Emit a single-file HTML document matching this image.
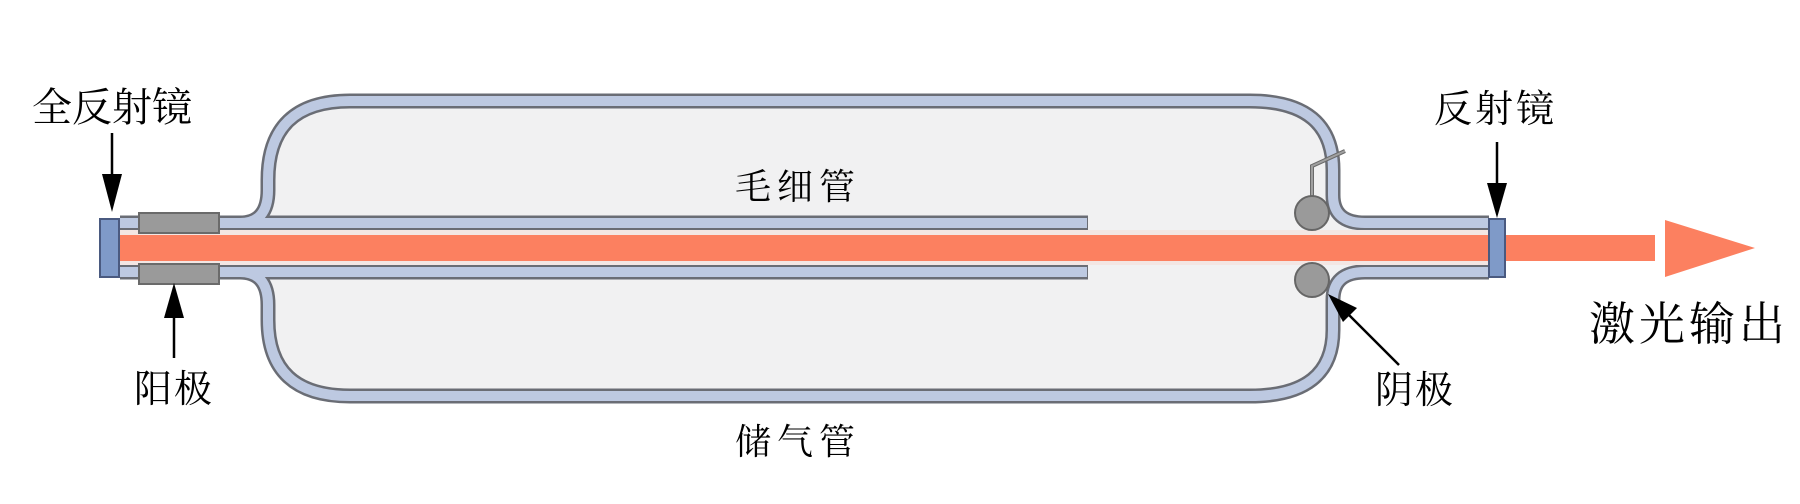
<!DOCTYPE html>
<html><head><meta charset="utf-8"><style>
html,body{margin:0;padding:0;background:#fff;}
svg{display:block}
text{font-family:"Noto Serif CJK SC","Liberation Serif",serif;fill:#000;}
</style></head><body>
<svg width="1800" height="504" viewBox="0 0 1800 504" xmlns="http://www.w3.org/2000/svg">
<path d="M240 223 Q268 223 268 190 L268 180 Q268 101 350 101 L1250 101 Q1333 101 1333 170 L1333 195 Q1333 223 1365 223 L1365 272 Q1333 272 1333 300 L1333 330 Q1333 396 1250 396 L350 396 Q268 396 268 320 L268 305 Q268 272 240 272 Z" fill="#F1F1F2"/>
<g fill="none" stroke-linejoin="round">
<g stroke="#6A6D75" stroke-width="15">
<path d="M219 223 L240 223 Q268 223 268 190 L268 180 Q268 101 350 101 L1250 101 Q1333 101 1333 170 L1333 195 Q1333 223 1365 223 L1489 223"/>
<path d="M219 272 L240 272 Q268 272 268 305 L268 320 Q268 396 350 396 L1250 396 Q1333 396 1333 330 L1333 300 Q1333 272 1365 272 L1489 272"/>
<path d="M120 223 L1088 223 M120 272 L1088 272"/>
</g>
<g stroke="#BDC9E1" stroke-width="10">
<path d="M219 223 L240 223 Q268 223 268 190 L268 180 Q268 101 350 101 L1250 101 Q1333 101 1333 170 L1333 195 Q1333 223 1365 223 L1489 223"/>
<path d="M219 272 L240 272 Q268 272 268 305 L268 320 Q268 396 350 396 L1250 396 Q1333 396 1333 330 L1333 300 Q1333 272 1365 272 L1489 272"/>
<path d="M120 223 L1087 223 M120 272 L1087 272"/>
</g>
</g>
<rect x="120" y="230" width="1369" height="35" fill="#F3E6E3"/>
<rect x="120" y="235" width="1535" height="26" fill="#FC8060"/>
<polygon points="1665,220 1755,248 1665,277" fill="#FC8060"/>
<rect x="139" y="213" width="80" height="20" fill="#9A9A9A" stroke="#6A6A6A" stroke-width="2"/>
<rect x="139" y="264" width="80" height="20" fill="#9A9A9A" stroke="#6A6A6A" stroke-width="2"/>
<rect x="100" y="219" width="19" height="58" fill="#7F9AC8" stroke="#4A5A80" stroke-width="2"/>
<rect x="1489" y="219" width="16" height="58" fill="#7F9AC8" stroke="#4A5A80" stroke-width="2"/>
<path d="M1312 198 L1312 166 L1345 151" fill="none" stroke="#6A6A6A" stroke-width="4"/>
<path d="M1312 198 L1312 166 L1345 151" fill="none" stroke="#A0A0A0" stroke-width="2"/>
<circle cx="1312" cy="213" r="17" fill="#9A9A9A" stroke="#666" stroke-width="2"/>
<circle cx="1312" cy="280" r="17" fill="#9A9A9A" stroke="#666" stroke-width="2"/>
<g stroke="#000" stroke-width="2.5">
<line x1="112" y1="133" x2="112" y2="200"/>
<line x1="174" y1="310" x2="174" y2="358"/>
<line x1="1497" y1="142" x2="1497" y2="185"/>
<line x1="1399" y1="365" x2="1340" y2="306"/>
</g>
<polygon points="102,174 122,174 112,212" fill="#000"/>
<polygon points="164,318 184,318 174,283" fill="#000"/>
<polygon points="1487,183 1507,183 1497,218" fill="#000"/>
<polygon points="1328,294 1357,308 1343,322" fill="#000"/>
<text x="32" y="121" font-size="40">全反射镜</text>
<text x="134" y="402" font-size="38" letter-spacing="2">阳极</text>
<text x="735" y="199" font-size="36" letter-spacing="6">毛细管</text>
<text x="735" y="454" font-size="36" letter-spacing="6">储气管</text>
<text x="1434" y="122" font-size="38" letter-spacing="3">反射镜</text>
<text x="1375" y="403" font-size="38" letter-spacing="2">阴极</text>
<text x="1589" y="340" font-size="46" letter-spacing="4">激光输出</text>
</svg>
</body></html>
